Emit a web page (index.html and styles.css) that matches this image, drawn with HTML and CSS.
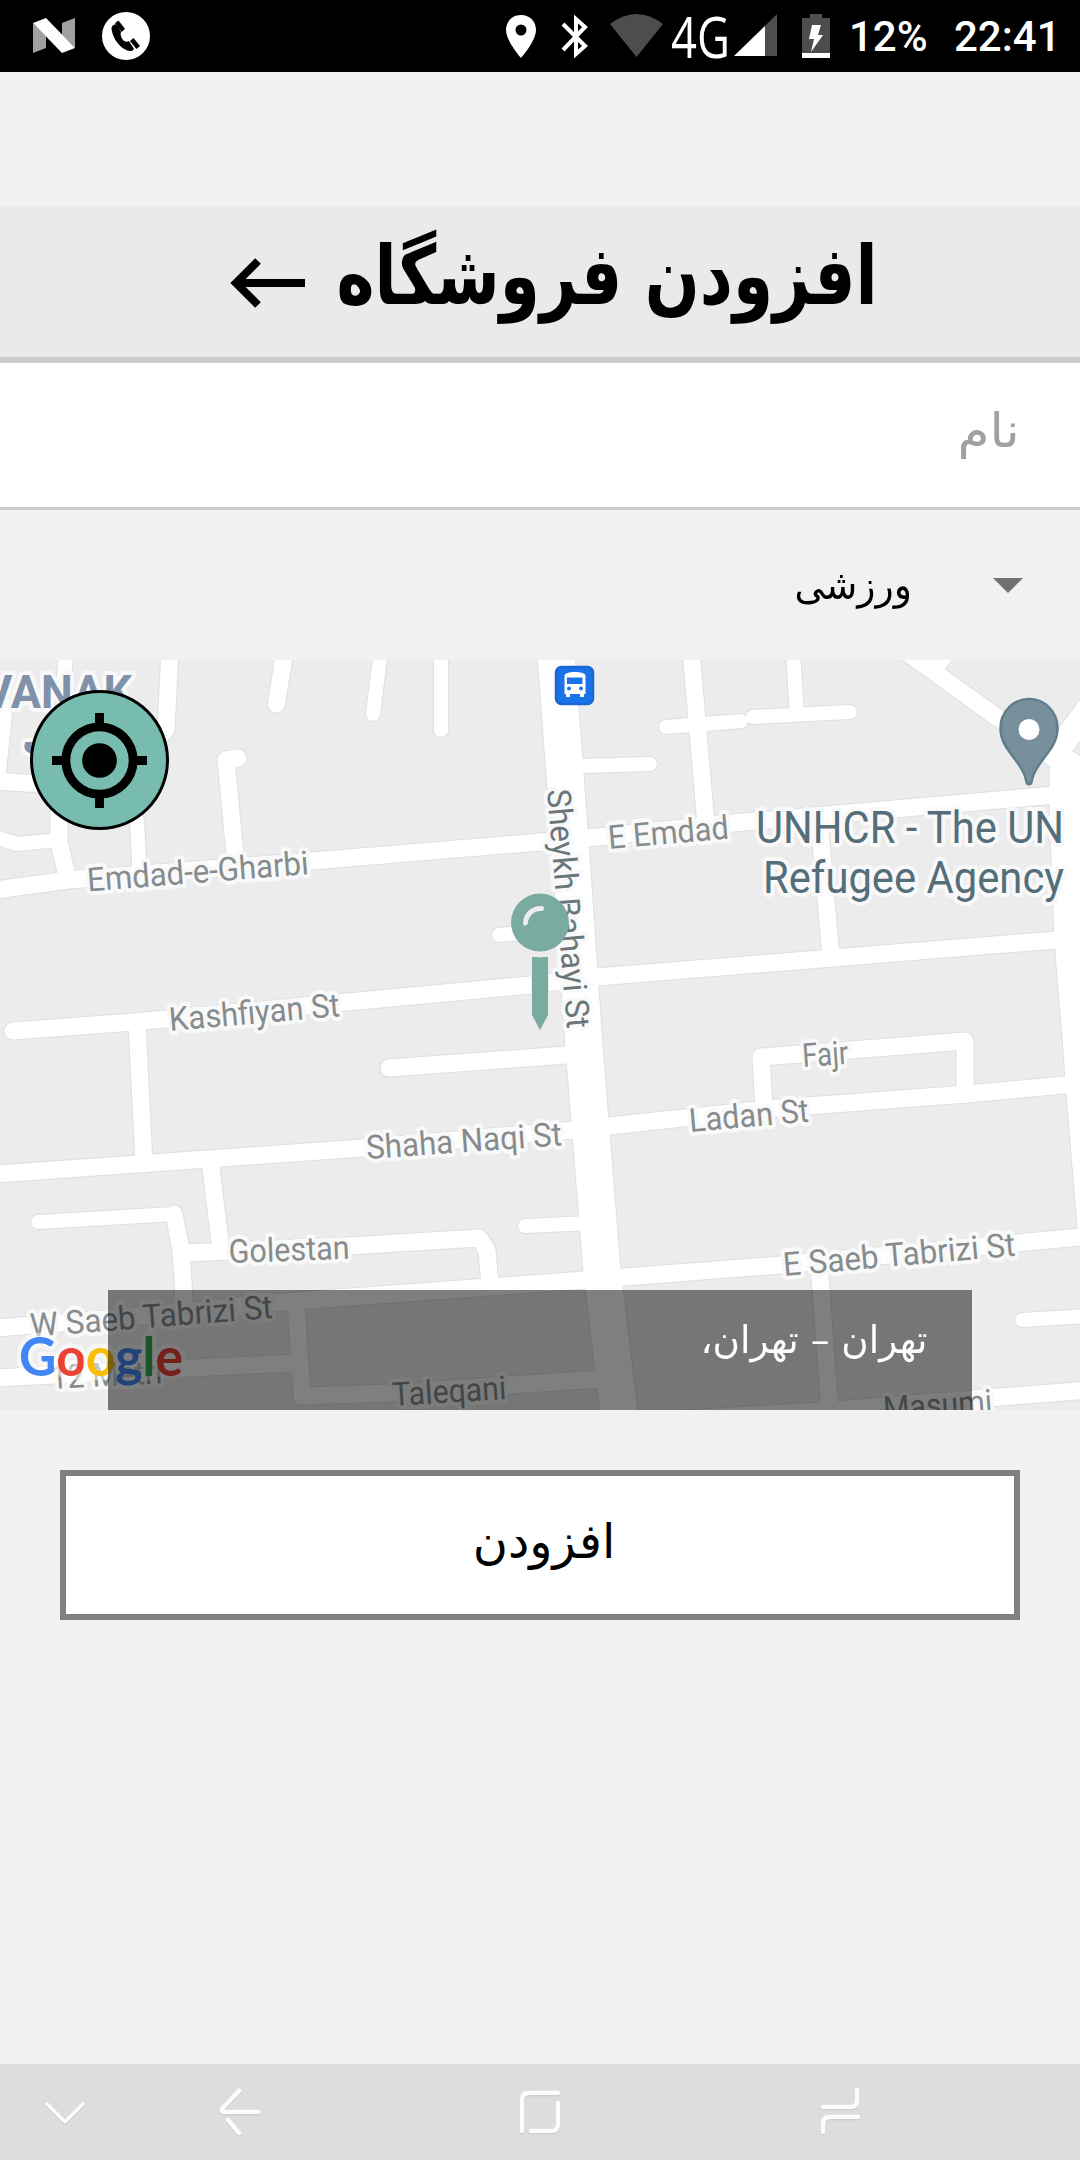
FILE: index.html
```html
<!DOCTYPE html>
<html lang="fa">
<head>
<meta charset="utf-8">
<title>افزودن فروشگاه</title>
<link rel="stylesheet" href="styles.css">
</head>
<body>
<header class="status">
  <div class="status-left">
    <svg class="ic-n" width="42" height="35" viewBox="0 0 42 35"><path fill="#a0a0a0" d="M0 5L13 18V30L0 35zM29 5L42 0V30L29 17z"/><path fill="#fff" d="M0 5L13 0 42 30 29 35z"/></svg>
    <svg class="ic-call" width="48" height="48" viewBox="0 0 48 48"><circle cx="24" cy="24" r="24" fill="#fff"/><path d="M9.500 16C10 26 19 38 28 39c2 0 3-.5 4-2l-5-8c-2 1-4 1-6-1-2-3-3-5-2-8l-5-8c-3 1-4.500 2-4.500 4zM13 11l3.500-2.500L23 17l-3.500 3zM28 29l3.500-3L38 34l-3.500 3z"/></svg>
  </div>
  <div class="status-right">
    <svg class="ic-loc" width="30" height="43" viewBox="0 0 30 43"><path fill="#fff" fill-rule="evenodd" d="M15 0C6 0 0 6.500 0 15c0 11 15 28 15 28s15-17 15-28C30 6.500 24 0 15 0zm0 9.500a5.500 5.500 0 1 1 0 11 5.500 5.500 0 0 1 0-11z"/></svg>
    <svg class="ic-bt" width="27" height="43" viewBox="0 0 27 43"><path fill="none" stroke="#fff" stroke-width="4" d="M2 9L24 31 15 39V4l9 8L2 35"/></svg>
    <svg class="ic-wifi" width="53" height="43" viewBox="0 0 53 43"><path fill="#4d4d4d" d="M0 10Q26.500-10 53 10L26.500 43z"/></svg>
    <span class="net">4G</span>
    <svg class="ic-sig" width="43" height="42" viewBox="0 0 43 42"><path fill="#4d4d4d" d="M43 0V42H0z"/><path fill="#fff" d="M31 12V42H0z"/></svg>
    <svg class="ic-bat" width="28" height="44" viewBox="0 0 28 44"><path fill="#4d4d4d" d="M8 0h12v4h8v40H0V4h8z"/><path fill="#fff" d="M0 39h28v5H0zM10 11h9l-3 10h5L9 38l3-13H7z"/></svg>
    <span class="pct">12%</span>
    <span class="clock">22:41</span>
  </div>
</header>

<main>
  <div class="title">
    <svg class="back" width="75" height="50" viewBox="0 0 75 50"><path fill="none" stroke="#000" stroke-width="8" d="M28 3L6 25 28 47M6 25H75"/></svg>
    <h1 dir="rtl"><span>افزودن فروشگاه</span></h1>
  </div>
  <div class="field" dir="rtl"><span class="hint">نام</span></div>
  <div class="picker" dir="rtl">
    <svg width="30" height="15" viewBox="0 0 30 15"><path fill="#707070" d="M0 0h30L15 15z"/></svg>
    <span class="choice">ورزشی</span>
  </div>
  <section class="map">
    <svg class="canvas" width="1080" height="750" viewBox="0 660 1080 750">
      <defs>
        <g id="roads">
          <g class="w14">
            <path d="M66 655L62 700M6 705L-2 780"/>
            <path d="M381 650L373 714M441 650V730"/>
            <path d="M666 727L741 721M753 717L850 712M793 650L797 715M580 766L650 764"/>
            <path d="M499 935L535 932M38 1222L174 1214M525 1226L590 1223M1022 1320L1090 1316"/>
            <path d="M137 820L140 880M-2 838L17 844 59 840"/>
          </g>
          <g class="w17">
            <path d="M-5 781L40 784M170 650L166 729 135 765"/>
            <path d="M285 650L276.500 704M238 758L226 760 236 865"/>
            <path d="M59 800V842L68 880"/>
            <path d="M-5 890L68 880 312 861 540 842 588 838 733 823 1055 795"/>
            <path d="M13 1031L133 1022 530 985 597 977 833 958 1056 940"/>
            <path d="M137 1022L144 1164M210 1160L221 1250"/>
            <path d="M-5 1174L207 1159 362 1148 573 1130 609 1126 767 1109 967 1094 1085 1083"/>
            <path d="M174 1214L181 1250 185 1312M183 1253L348 1246 479 1238 487 1250 490 1285"/>
            <path d="M389 1068L580 1054"/>
            <path d="M-5 1328L108 1319 296 1301 489 1287 585 1280 781 1265 1017 1243 1090 1236"/>
            <path d="M296 1301L302 1396 393 1393 600 1379M-5 1378L293 1363"/>
            <path d="M819 1262L830 1412M600 1424L821 1411 1090 1390"/>
            <path d="M691 650L706 825M820 830L831 958"/>
            <path d="M764 1108L761 1057 965 1041V1094"/>
            <path d="M905 651L1063 765M935 668L950 648"/>
          </g>
          <path class="w26" d="M1058 750L1095 700"/>
          <path class="w37" d="M555 640L570 842 584 1045 590 1122 602 1270 621 1430"/>
          <path class="w37" d="M1068 770V800L1073 940 1082 1050 1085 1093 1097 1240"/>
        </g>
      </defs>
      <rect y="660" width="1080" height="750" fill="#ececec"/>
      <use href="#roads" class="casing"/>
      <use href="#roads" class="fill"/>

      <g class="labels">
        <text transform="translate(88 891.500) rotate(-4.500)" textLength="222" lengthAdjust="spacingAndGlyphs">Emdad-e-Gharbi</text>
        <text transform="translate(170 1031) rotate(-5)" textLength="171" lengthAdjust="spacingAndGlyphs">Kashfiyan St</text>
        <text transform="translate(609 849) rotate(-5)" textLength="121" lengthAdjust="spacingAndGlyphs">E Emdad</text>
        <text class="dark" transform="translate(547 790) rotate(85.200)" textLength="240" lengthAdjust="spacingAndGlyphs">Sheykh Bahayi St</text>
        <text transform="translate(803 1067) rotate(-4)" textLength="46" lengthAdjust="spacingAndGlyphs">Fajr</text>
        <text transform="translate(690 1132) rotate(-5)" textLength="120" lengthAdjust="spacingAndGlyphs">Ladan St</text>
        <text transform="translate(367 1159) rotate(-4)" textLength="196" lengthAdjust="spacingAndGlyphs">Shaha Naqi St</text>
        <text transform="translate(229 1263) rotate(-2)" textLength="121" lengthAdjust="spacingAndGlyphs">Golestan</text>
        <text transform="translate(784 1276) rotate(-5)" textLength="233" lengthAdjust="spacingAndGlyphs">E Saeb Tabrizi St</text>
        <text transform="translate(31 1337) rotate(-4.500)" textLength="243" lengthAdjust="spacingAndGlyphs">W Saeb Tabrizi St</text>
        <text transform="translate(51 1389) rotate(-3)" textLength="112" lengthAdjust="spacingAndGlyphs">12 Metri</text>
        <text transform="translate(393 1406) rotate(-3.500)" textLength="114" lengthAdjust="spacingAndGlyphs">Taleqani</text>
        <text transform="translate(884 1420) rotate(-4)" textLength="109" lengthAdjust="spacingAndGlyphs">Masumi</text>
        <text class="poi" x="756" y="843" textLength="308" lengthAdjust="spacingAndGlyphs">UNHCR - The UN</text>
        <text class="poi" x="763" y="893" textLength="301" lengthAdjust="spacingAndGlyphs">Refugee Agency</text>
        <text class="area" x="-17" y="708" textLength="149" lengthAdjust="spacingAndGlyphs">VANAK</text>
        <text class="area fa" x="22" y="752">ونک</text>
      </g>

      <g>
        <rect x="556" y="667" width="37" height="37" rx="5.500" fill="#1a73e8" stroke="#1967d2" stroke-width="2.500"/>
        <path fill="#fff" fill-rule="evenodd" d="M564.500 676c0-3 5-4 10.500-4s10.500 1 10.500 4v18h-1.500v3h-4v-3h-10v3h-4v-3h-1.500zM567 677.500v6.500h15.500v-6.500z"/>
        <circle cx="569" cy="688.500" r="2" fill="#1a73e8"/><circle cx="581" cy="688.500" r="2" fill="#1a73e8"/>
      </g>
      <path fill="#78909c" stroke="#607d8b" stroke-width="2.500" d="M1029 699c-16 0-28.500 13-28.500 29 0 21 18 30 24.500 48l1.500 6c.7 3 4.300 3 5 0l1.500-6c6.500-18 24.500-27 24.500-48 0-16-12.500-29-28.500-29z"/>
      <circle cx="1029" cy="729.500" r="10.500" fill="#fff"/>

      <text class="logo" x="19" y="1376" textLength="164" lengthAdjust="spacingAndGlyphs"><tspan fill="#4285f4">G</tspan><tspan fill="#ea4335">o</tspan><tspan fill="#fbbc05">o</tspan><tspan fill="#4285f4">g</tspan><tspan fill="#34a853">l</tspan><tspan fill="#ea4335">e</tspan></text>

      <circle cx="540" cy="922.500" r="29" fill="#79aba0"/>
      <path fill="none" stroke="#ececec" stroke-width="5" stroke-linecap="round" d="M525.500 923a15 15 0 0 1 16-14.500"/>
      <path fill="#79aba0" stroke="#ececec" stroke-width="1" d="M531.500 956q8.500 2 17 0v59l-8.500 16-8.500-16z"/>
    </svg>
    <button class="locate" aria-label="موقعیت من">
      <svg width="95" height="95" viewBox="0 0 96 96"><circle cx="48" cy="48" r="34" fill="none" stroke="#000" stroke-width="9"/><circle cx="48" cy="48" r="17.500"/><path stroke="#000" stroke-width="9" d="M48 0v14M48 82v14M0 48h14M82 48h14"/></svg>
    </button>
    <div class="address" dir="rtl"><span>تهران – تهران،</span></div>
  </section>
  <button class="submit"><span>افزودن</span></button>
</main>

<nav class="navbar">
  <svg width="1080" height="96" viewBox="0 2064 1080 96" fill="none" stroke-linecap="round" stroke-linejoin="round">
    <g stroke="#fcfcfc" stroke-width="4.500">
      <path stroke-width="3.500" d="M47 2104L65 2122 83 2104"/>
      <path d="M239 2091L222 2109Q221 2112 224 2112H258M228 2120L239 2133"/>
      <path d="M522 2131V2100Q522 2093 529 2093H558M558 2103V2124Q558 2131 551 2131H531"/>
      <path d="M857 2090V2101Q857 2107 850 2107H823M823 2132V2123Q823 2117 830 2117H858"/>
    </g>
  </svg>
</nav>
</body>
</html>
```
FILE: styles.css
```css
* { box-sizing: border-box; }
body {
  margin: 0;
  width: 1080px;
  height: 2160px;
  overflow: hidden;
  display: flex;
  flex-direction: column;
  background: #f1f1f1;
  font-family: "DejaVu Sans", "Noto Sans", sans-serif;
  color: #000;
}
svg { display: block; flex: none; }
main { flex: 1; padding-top: 135px; display: flex; flex-direction: column; }

/* status bar */
.status {
  height: 72px;
  background: #000;
  color: #fff;
  display: flex;
  justify-content: space-between;
  align-items: flex-start;
  font-family: Roboto, sans-serif;
  font-weight: 500;
  font-size: 42px;
  line-height: 74px;
  white-space: nowrap;
}
.status-left, .status-right { display: flex; align-items: flex-start; height: 72px; }
.ic-n { margin: 18px 27px 0 33px; }
.ic-call { margin-top: 12px; }
.status-right { width: 574px; }
.ic-loc { margin-top: 15px; }
.ic-bt { margin: 15px 0 0 25px; }
.ic-wifi { margin: 14px 0 0 22px; }
.net {
  width: 62px;
  margin-left: 8px;
  font-family: "Open Sans", sans-serif;
  font-weight: 400;
  font-size: 56px;
  line-height: 72px;
  transform: scaleX(.81);
  transform-origin: 0 50%;
}
.ic-sig { margin: 14px 0 0 1px; }
.ic-bat { margin: 14px 0 0 25px; }
.pct { width: 105px; margin-left: 19px; }
.clock { width: 105px; }

/* title */
.title {
  height: 156px;
  background: #eaeaea;
  border-bottom: 6px solid #ccc;
  display: flex;
  align-items: center;
}
.back { margin: 1px 33px 0 230px; }
h1 {
  margin: 0;
  width: 540px;
  height: 150px;
  font-size: 82px;
  line-height: 138px;
  white-space: nowrap;
  font-weight: 700;
}
h1 span { display: inline-block; transform: scaleX(.787); transform-origin: 100% 50%; }

/* form rows */
.field {
  height: 147px;
  background: #fff;
  border-bottom: 3px solid #ccc;
  padding: 0 60px;
  line-height: 134px;
  font-size: 48px;
  color: #a0a0a0;
}
.hint, .choice, .address span, .submit span { display: inline-block; white-space: nowrap; transform-origin: 100% 50%; }
.hint { transform: scaleX(1.08); }
.choice { transform: scaleX(.94); }
.address span { transform: scaleX(.985); }
.picker {
  height: 150px;
  padding: 0 57px;
  display: flex;
  align-items: center;
  gap: 81px;
  font-size: 40px;
}

/* map */
.map { position: relative; height: 750px; overflow: hidden; }
.casing { --edge: 2px; stroke: #dfdfe3; }
.fill { --edge: 0px; stroke: #fff; }
#roads { fill: none; stroke-linecap: round; stroke-linejoin: round; }
.w14 { stroke-width: calc(14px + var(--edge, 0px)); }
.w17 { stroke-width: calc(17px + var(--edge, 0px)); }
.w26 { stroke-width: calc(24px + var(--edge, 0px)); }
.w37 { stroke-width: calc(37px + var(--edge, 0px)); }
.labels {
  font: 400 33px Roboto, sans-serif;
  fill: #868c8e;
  stroke: #f9f9f9;
  stroke-width: 8px;
  stroke-linejoin: round;
  paint-order: stroke;
}
.labels .dark { fill: #6a7679; }
.labels .poi { font-size: 45px; fill: #546e7a; }
.labels .area { font-size: 47px; font-weight: 700; fill: #8091aa; }
.labels .fa { font-family: "DejaVu Sans", sans-serif; font-size: 38px; }
.logo {
  font: 700 53px Lato, sans-serif;
  stroke: rgba(255, 255, 255, .5);
  stroke-width: 9px;
  stroke-linejoin: round;
  paint-order: stroke;
}
.locate {
  position: absolute;
  left: 30px;
  top: 30px;
  width: 139px;
  height: 140px;
  padding: 0;
  border: 3px solid #000;
  border-radius: 50%;
  background: #78bcb0;
  display: flex;
  align-items: center;
  justify-content: center;
}
.address {
  position: absolute;
  left: 108px;
  bottom: 0;
  width: 864px;
  height: 120px;
  padding: 0 45px;
  background: rgba(0, 0, 0, .5);
  color: #fff;
  font-size: 38px;
  line-height: 100px;
}
.submit {
  margin: 60px 60px 0;
  height: 150px;
  border: 6px solid #808080;
  background: #fff;
  color: #000;
  padding: 0 0 9px 8px;
  font: 48px "DejaVu Sans", sans-serif;
}

/* navigation bar */
.navbar { height: 96px; background: #ddd; }
.navbar g { filter: drop-shadow(0 1.5px 0 rgba(0, 0, 0, .12)); }
```
